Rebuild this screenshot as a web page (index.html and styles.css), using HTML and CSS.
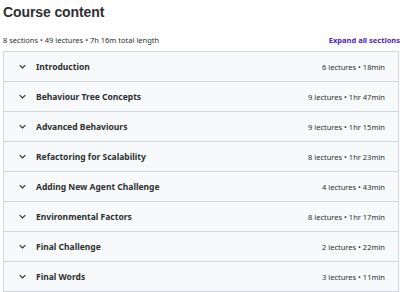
FILE: index.html
```html
<!DOCTYPE html>
<html lang="en">
<head>
  <meta charset="UTF-8">
  <title>Course content</title>
  <link rel="stylesheet" href="styles.css">
</head>
<body>
  <h2 class="title">Course content</h2>
  <div class="summary">
    <span>8 sections • 49 lectures • 7h 16m total length</span>
    <button class="expand">Expand all sections</button>
  </div>

  <div class="sections">
    <div class="section">
      <span class="chevron"><svg viewBox="0 0 10 6" width="7" height="5"><path d="M1 1l4 4 4-4" fill="none" stroke="#2d2f31" stroke-width="1.6"/></svg></span>
      <span class="name">Introduction</span>
      <span class="meta">6 lectures • 18min</span>
    </div>
    <div class="section">
      <span class="chevron"><svg viewBox="0 0 10 6" width="7" height="5"><path d="M1 1l4 4 4-4" fill="none" stroke="#2d2f31" stroke-width="1.6"/></svg></span>
      <span class="name">Behaviour Tree Concepts</span>
      <span class="meta">9 lectures • 1hr 47min</span>
    </div>
    <div class="section">
      <span class="chevron"><svg viewBox="0 0 10 6" width="7" height="5"><path d="M1 1l4 4 4-4" fill="none" stroke="#2d2f31" stroke-width="1.6"/></svg></span>
      <span class="name">Advanced Behaviours</span>
      <span class="meta">9 lectures • 1hr 15min</span>
    </div>
    <div class="section">
      <span class="chevron"><svg viewBox="0 0 10 6" width="7" height="5"><path d="M1 1l4 4 4-4" fill="none" stroke="#2d2f31" stroke-width="1.6"/></svg></span>
      <span class="name">Refactoring for Scalability</span>
      <span class="meta">8 lectures • 1hr 23min</span>
    </div>
    <div class="section">
      <span class="chevron"><svg viewBox="0 0 10 6" width="7" height="5"><path d="M1 1l4 4 4-4" fill="none" stroke="#2d2f31" stroke-width="1.6"/></svg></span>
      <span class="name">Adding New Agent Challenge</span>
      <span class="meta">4 lectures • 43min</span>
    </div>
    <div class="section">
      <span class="chevron"><svg viewBox="0 0 10 6" width="7" height="5"><path d="M1 1l4 4 4-4" fill="none" stroke="#2d2f31" stroke-width="1.6"/></svg></span>
      <span class="name">Environmental Factors</span>
      <span class="meta">8 lectures • 1hr 17min</span>
    </div>
    <div class="section">
      <span class="chevron"><svg viewBox="0 0 10 6" width="7" height="5"><path d="M1 1l4 4 4-4" fill="none" stroke="#2d2f31" stroke-width="1.6"/></svg></span>
      <span class="name">Final Challenge</span>
      <span class="meta">2 lectures • 22min</span>
    </div>
    <div class="section">
      <span class="chevron"><svg viewBox="0 0 10 6" width="7" height="5"><path d="M1 1l4 4 4-4" fill="none" stroke="#2d2f31" stroke-width="1.6"/></svg></span>
      <span class="name">Final Words</span>
      <span class="meta">3 lectures • 11min</span>
    </div>
  </div>
</body>
</html>
```

FILE: styles.css
```css
* {
  margin: 0;
  padding: 0;
  box-sizing: border-box;
}

body {
  font-family: "Noto Sans", "Liberation Sans", sans-serif;
  color: #2d2f31;
  background: #fff;
  padding: 2px 0 0 3px;
  overflow: hidden;
}

.title {
  font-family: "Liberation Sans", sans-serif;
  font-size: 14px;
  font-weight: 700;
  line-height: 20px;
  letter-spacing: -0.1px;
}

.summary {
  display: flex;
  justify-content: space-between;
  align-items: center;
  height: 14px;
  margin-top: 11px;
  margin-bottom: 4px;
  font-size: 7.5px;
}

.expand {
  border: none;
  background: none;
  font-family: inherit;
  font-size: 7.5px;
  font-weight: 700;
  color: #5022c3;
}

.sections {
  width: 396px;
  border: 1px solid #d1d7dc;
}

.section {
  display: flex;
  align-items: center;
  height: 30px;
  background: #f7f9fa;
  border-bottom: 1px solid #d1d7dc;
  padding: 0 13px 0 15px;
}

.section:last-child {
  height: 29px;
  border-bottom: none;
}

.chevron {
  display: flex;
  width: 17px;
}

.name {
  flex: 1;
  font-size: 8.5px;
  font-weight: 700;
}

.meta {
  font-size: 7.5px;
}
```
